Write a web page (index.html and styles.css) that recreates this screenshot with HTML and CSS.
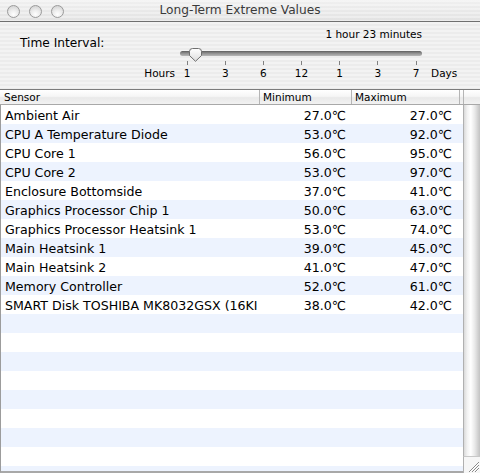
FILE: index.html
```html
<!DOCTYPE html>
<html>
<head>
<meta charset="utf-8">
<link rel="stylesheet" href="styles.css">
</head>
<body>
<div class="window">
  <div class="titlebar">
    <div class="lights"><span class="light"></span><span class="light"></span><span class="light"></span></div>
    <div class="title">Long-Term Extreme Values</div>
    <div></div>
  </div>
  <div class="controls">
    <div class="time-label">Time Interval:</div>
    <div class="slider">
      <div class="readout">1 hour 23 minutes</div>
      <div class="track-row">
        <div class="track"></div>
        <svg class="thumb" width="15" height="14" viewBox="0 0 15 14">
          <defs><linearGradient id="tg" x1="0" y1="0" x2="0" y2="1"><stop offset="0" stop-color="#ffffff"/><stop offset="1" stop-color="#dcdcdc"/></linearGradient></defs>
          <path d="M1.5 3.5 Q1.5 0.5 4.5 0.5 H10.5 Q13.5 0.5 13.5 3.5 V7.5 L7.5 13.3 L1.5 7.5 Z" fill="url(#tg)" stroke="#6e6e6e" stroke-width="1"/>
        </svg>
      </div>
      <div class="ticks"><span></span><span></span><span></span><span></span><span></span><span></span><span></span></div>
      <div class="scale">
        <span class="unit hours">Hours</span>
        <span class="num">1</span><span class="num">3</span><span class="num">6</span><span class="num">12</span><span class="num">1</span><span class="num">3</span><span class="num">7</span>
        <span class="unit days">Days</span>
      </div>
    </div>
  </div>
  <div class="thead">
    <div class="th">Sensor</div>
    <div class="th sep">Minimum</div>
    <div class="th sep">Maximum</div>
    <div class="th sep"></div>
    <div class="th sep"></div>
  </div>
  <div class="tbody">
    <div class="rows">
      <div class="row"><div class="name">Ambient Air</div><div class="min">27.0℃</div><div class="max">27.0℃</div></div>
      <div class="row"><div class="name">CPU A Temperature Diode</div><div class="min">53.0℃</div><div class="max">92.0℃</div></div>
      <div class="row"><div class="name">CPU Core 1</div><div class="min">56.0℃</div><div class="max">95.0℃</div></div>
      <div class="row"><div class="name">CPU Core 2</div><div class="min">53.0℃</div><div class="max">97.0℃</div></div>
      <div class="row"><div class="name">Enclosure Bottomside</div><div class="min">37.0℃</div><div class="max">41.0℃</div></div>
      <div class="row"><div class="name">Graphics Processor Chip 1</div><div class="min">50.0℃</div><div class="max">63.0℃</div></div>
      <div class="row"><div class="name">Graphics Processor Heatsink 1</div><div class="min">53.0℃</div><div class="max">74.0℃</div></div>
      <div class="row"><div class="name">Main Heatsink 1</div><div class="min">39.0℃</div><div class="max">45.0℃</div></div>
      <div class="row"><div class="name">Main Heatsink 2</div><div class="min">41.0℃</div><div class="max">47.0℃</div></div>
      <div class="row"><div class="name">Memory Controller</div><div class="min">52.0℃</div><div class="max">61.0℃</div></div>
      <div class="row"><div class="name">SMART Disk TOSHIBA MK8032GSX (16KI</div><div class="min">38.0℃</div><div class="max">42.0℃</div></div>
      <div class="row"></div>
      <div class="row"></div>
      <div class="row"></div>
      <div class="row"></div>
      <div class="row"></div>
      <div class="row"></div>
      <div class="row"></div>
      <div class="row"></div>
      <div class="row"></div>
    </div>
    <div class="scrollbar">
      <div class="sb-track"></div>
      <div class="grip">
        <svg width="16" height="16" viewBox="0 0 16 16">
          <path d="M15 5 L5 15 M15 8 L8 15 M15 11 L11 15" stroke="#8a8a8a" stroke-width="1"/>
          <path d="M15 6 L6 15 M15 9 L9 15 M15 12 L12 15" stroke="#ffffff" stroke-width="1"/>
        </svg>
      </div>
    </div>
  </div>
</div>
</body>
</html>
```
FILE: styles.css
```css
html, body {
  margin: 0;
  padding: 0;
}
body {
  width: 480px;
  height: 473px;
  overflow: hidden;
  font-family: "DejaVu Sans", "Liberation Sans", sans-serif;
  color: #000;
}
.window {
  width: 480px;
  height: 473px;
  display: flex;
  flex-direction: column;
  background: repeating-linear-gradient(to bottom, #ececec 0, #ececec 2px, #f3f3f3 2px, #f3f3f3 4px);
  overflow: hidden;
}
.titlebar {
  height: 21px;
  flex: none;
  border-bottom: 1px solid #707070;
  display: grid;
  grid-template-columns: 1fr auto 1fr;
  align-items: center;
  background:
    repeating-linear-gradient(to bottom, rgba(255,255,255,0.35) 0, rgba(255,255,255,0.35) 2px, rgba(0,0,0,0) 2px, rgba(0,0,0,0) 4px),
    linear-gradient(to bottom, #f0f0f0, #e2e2e2);
}
.lights {
  display: flex;
  gap: 9px;
  padding-left: 7px;
  padding-top: 1px;
}
.light {
  width: 11px;
  height: 11px;
  border-radius: 50%;
  border: 1px solid #9a9a9a;
  background: radial-gradient(circle at 50% 75%, #ffffff 0, #ebebeb 45%, #cbcbcb 100%);
}
.title {
  font-size: 12.2px;
  color: #3a3a3a;
  line-height: 21px;
  white-space: nowrap;
}
.controls {
  height: 67px;
  flex: none;
  display: flex;
}
.time-label {
  width: 140px;
  box-sizing: border-box;
  padding: 14px 0 0 20px;
  font-size: 12.2px;
  line-height: 14px;
  white-space: nowrap;
}
.slider {
  display: flex;
  flex-direction: column;
  width: 320px;
}
.readout {
  margin-top: 6px;
  margin-left: 28px;
  width: 254px;
  text-align: right;
  font-size: 10.5px;
  line-height: 12px;
  white-space: nowrap;
}
.track-row {
  position: relative;
  margin-top: 6px;
  margin-left: 40px;
  width: 242px;
  height: 15px;
  box-sizing: border-box;
  padding-top: 5px;
}
.track {
  height: 5px;
  border-radius: 3px;
  background: linear-gradient(to bottom, #5c5c5c 0, #8a8a8a 40%, #b8b8b8 100%);
}
.thumb {
  position: absolute;
  left: 8px;
  top: 2px;
}
.ticks {
  display: flex;
  margin-left: 28px;
  height: 4px;
}
.ticks span {
  width: 38.17px;
  display: flex;
  justify-content: center;
}
.ticks span::before {
  content: "";
  width: 1px;
  height: 4px;
  background: #808080;
}
.scale {
  display: flex;
  margin-top: 2px;
  font-size: 10.5px;
  line-height: 13px;
  white-space: nowrap;
}
.unit.hours {
  width: 35px;
  text-align: right;
  margin-right: -7px;
}
.num {
  width: 38.17px;
  text-align: center;
}
.unit.days {
  margin-left: -4px;
}
.thead {
  flex: none;
  display: grid;
  grid-template-columns: 259px 92px 108px 4px 17px;
  height: 14px;
  border-top: 1px solid #7c7c7c;
  border-bottom: 1px solid #a8a8a8;
  background: linear-gradient(to bottom, #ffffff 0, #f6f6f6 45%, #e9e9e9 55%, #f2f2f2 100%);
  font-size: 10.5px;
  line-height: 14px;
}
.th {
  padding-left: 4px;
  white-space: nowrap;
  overflow: hidden;
}
.th.sep {
  border-left: 1px solid #b5b5b5;
  padding-left: 3px;
}
.tbody {
  flex: 1;
  display: flex;
  min-height: 0;
}
.rows {
  width: 462px;
  border-left: 1px solid #9c9c9c;
  border-bottom: 2px solid #a8a8a8;
  background: #fff;
  overflow: hidden;
}
.row {
  display: grid;
  grid-template-columns: 258px 92px 108px;
  height: 19px;
  box-sizing: border-box;
  padding-top: 1px;
  line-height: 19px;
  font-size: 12.6px;
  background: #fff;
}
.row:nth-child(even) {
  background: #edf3fe;
}
.name {
  padding-left: 4px;
  white-space: nowrap;
  overflow: hidden;
  text-overflow: clip;
}
.min {
  text-align: right;
  padding-right: 5px;
}
.max {
  text-align: right;
  padding-right: 7px;
}
.scrollbar {
  width: 17px;
  display: flex;
  flex-direction: column;
}
.sb-track {
  flex: 1;
  border-left: 1px solid #b0b0b0;
  background: linear-gradient(to right, #dadada 0, #f2f2f2 20%, #ffffff 42%, #e8e8e8 68%, #c2c2c2 100%);
}
.grip {
  height: 16px;
  border-left: 1px solid #b0b0b0;
  border-top: 1px solid #c8c8c8;
  background: #f6f6f6;
}
.grip svg {
  display: block;
}
```
